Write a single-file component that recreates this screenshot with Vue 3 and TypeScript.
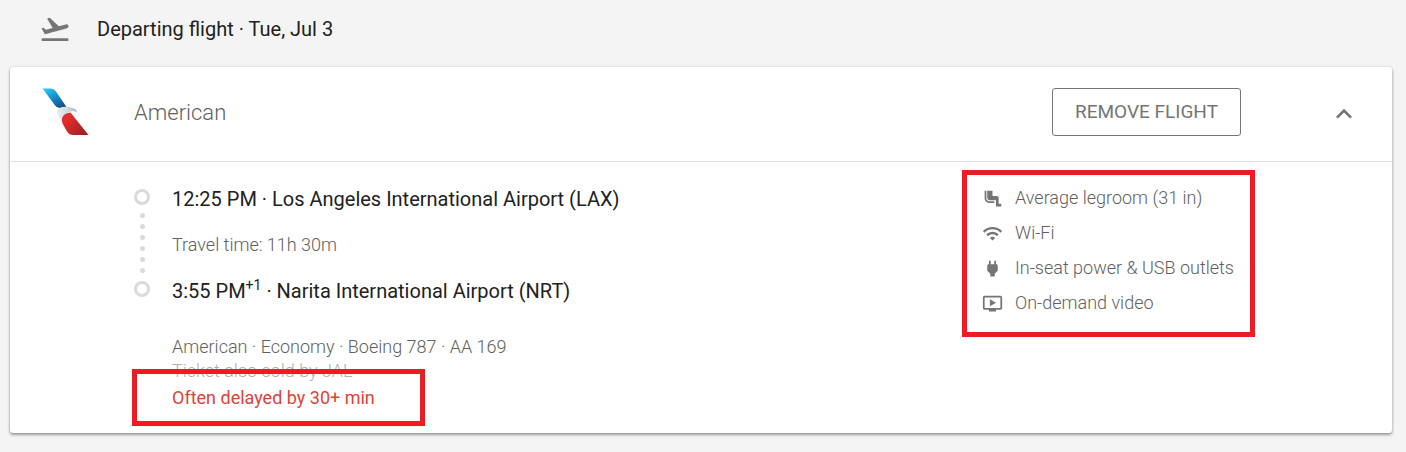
<script setup lang="ts">
import { ref } from 'vue'

interface Amenity {
  label: string
  path: string
}

const expanded = ref(true)

const amenities: Amenity[] = [
  {
    label: 'Average legroom (31 in)',
    path: 'M5 12V3H3v9c0 2.76 2.24 5 5 5h6v-2H8c-1.66 0-3-1.34-3-3zm15.5 6H19v-7c0-1.1-.9-2-2-2h-5V3H6v8c0 1.65 1.35 3 3 3h7v7h6v-3z',
  },
  {
    label: 'Wi-Fi',
    path: 'M1 9l2 2c4.97-4.97 13.03-4.97 18 0l2-2C16.93 2.93 7.08 2.93 1 9zm8 8l3 3 3-3c-1.65-1.66-4.34-1.66-6 0zm-4-4l2 2c2.76-2.76 7.24-2.76 10 0l2-2C15.14 9.14 8.87 9.14 5 13z',
  },
  {
    label: 'In-seat power & USB outlets',
    path: 'M16.01 7L16 3h-2v4h-4V3H8v4h-.01C7 6.99 6 7.99 6 8.99v5.49L9.5 18v3h5v-3l3.5-3.51v-5.5c0-1-1-2-1.99-1.99z',
  },
  {
    label: 'On-demand video',
    path: 'M21 3H3c-1.11 0-2 .89-2 2v12c0 1.1.89 2 2 2h5v2h8v-2h5c1.1 0 1.99-.9 1.99-2L23 5c0-1.1-.9-2-2-2zm0 14H3V5h18v12zm-5-6l-7 4V7z',
  },
]
</script>

<template>
  <main class="page">
    <header class="leg-title">
      <svg class="icon-large" viewBox="0 0 24 24" aria-hidden="true">
        <path d="M2 19h20v2H2zM22.07 9.64c-.21-.8-1.04-1.28-1.84-1.06L14.92 10l-6.9-6.43-1.93.51 4.14 7.17-4.97 1.33-1.97-1.54-1.45.39 1.82 3.16.77 1.33 1.6-.43 5.31-1.42 4.35-1.16L21 11.49c.81-.23 1.28-1.05 1.07-1.85z" />
      </svg>
      <h1>Departing flight · Tue, Jul 3</h1>
    </header>

    <section class="card">
      <div class="card-head">
        <svg class="logo" viewBox="0 0 48 48" role="img" aria-label="American Airlines">
          <defs>
            <linearGradient id="blue" x1="0" y1="0" x2="0.6" y2="1">
              <stop offset="0" stop-color="#2fd0f8" />
              <stop offset="0.5" stop-color="#1694cf" />
              <stop offset="1" stop-color="#17568f" />
            </linearGradient>
            <linearGradient id="red" x1="0" y1="0" x2="1" y2="0.7">
              <stop offset="0.3" stop-color="#e12d2b" />
              <stop offset="1" stop-color="#9f2026" />
            </linearGradient>
            <linearGradient id="silver" x1="0" y1="0" x2="1" y2="0">
              <stop offset="0" stop-color="#e9eef1" />
              <stop offset="0.5" stop-color="#d3dbe0" />
              <stop offset="1" stop-color="#aab7c0" />
            </linearGradient>
          </defs>
          <path fill="url(#blue)" d="M0.500 0.500h8.500q3 0 4.800 2.700L24.500 19q-4-.2-6.500.9-3.200 0-4.900-2.400z" />
          <path fill="url(#silver)" d="M15 22.500c2-3.500 9-4.500 14-3 3.500.8 5.500 2 6 4.500-2-1-4-.9-6-.4-4.500.8-7.500 3-8.500 9-3-2-6-6-5.500-10.100z" />
          <path fill="url(#red)" d="M28.500 24.500L46.500 47H31.500q-4 0-6.300-3.200L21 36.500c-3-6 0-11.500 7.500-12z" />
        </svg>
        <h2>American</h2>
        <button class="remove" type="button">REMOVE FLIGHT</button>
        <button
          class="toggle"
          type="button"
          aria-label="Toggle flight details"
          :aria-expanded="expanded"
          @click="expanded = !expanded"
        >
          <svg class="icon-large" :class="{ flipped: !expanded }" viewBox="0 0 24 24" aria-hidden="true">
            <path d="M12 8l-6 6 1.410 1.410L12 10.830l4.590 4.580L18 14z" />
          </svg>
        </button>
      </div>

      <div v-if="expanded" class="card-body">
        <div class="route" aria-hidden="true">
          <i class="stop"></i>
          <div class="dots"><i v-for="n in 6" :key="n"></i></div>
          <i class="stop"></i>
        </div>
        <div class="details">
          <p class="point">12:25 PM · Los Angeles International Airport (LAX)</p>
          <p class="travel">Travel time: 11h 30m</p>
          <p class="point">3:55 PM<sup>+1</sup> · Narita International Airport (NRT)</p>
          <p class="meta">American · Economy · Boeing 787 · AA 169</p>
          <p class="sold">Ticket also sold by JAL</p>
          <p class="delay">Often delayed by 30+ min</p>
        </div>
        <ul class="amenities">
          <li v-for="item in amenities" :key="item.label">
            <svg viewBox="0 0 24 24" aria-hidden="true"><path :d="item.path" /></svg>
            <span>{{ item.label }}</span>
          </li>
        </ul>
      </div>
    </section>
  </main>
</template>

<style>
body {
  background: #f4f4f4;
}
</style>

<style scoped>
.page {
  padding: 0 14px 19px 10px;
  font-family: Roboto, "Liberation Sans", sans-serif;
  color: #212121;
}

h1,
h2,
p,
ul {
  margin: 0;
  padding: 0;
  font-weight: 400;
}

svg {
  display: block;
  flex: none;
  fill: #757575;
}

.icon-large {
  width: 32px;
  height: 32px;
}

.flipped {
  transform: rotate(180deg);
}

.leg-title {
  display: flex;
  align-items: center;
  gap: 26px;
  height: 58px;
  padding: 0 0 9px 29px;
}

h1 {
  font-size: 20px;
  line-height: 24px;
}

.card {
  background: #fff;
  border-radius: 3px;
  box-shadow: 0 2px 3px rgba(0, 0, 0, 0.34), 0 0 3px rgba(0, 0, 0, 0.14);
}

.card-head {
  display: flex;
  align-items: center;
  height: 90px;
  padding: 0 32px 4px;
  border-bottom: 1px solid #e0e0e0;
}

.logo {
  width: 48px;
  height: 48px;
}

h2 {
  flex: 1;
  margin-left: 44px;
  padding-top: 2px;
  font-size: 22px;
  font-weight: 300;
  line-height: 28px;
  color: #616161;
}

.remove {
  height: 48px;
  padding: 0 22px;
  border: 1px solid #757575;
  border-radius: 3px;
  background: #fff;
  color: #757575;
  font: 400 19px/24px Roboto, "Liberation Sans", sans-serif;
}

.toggle {
  margin-left: 87px;
  padding: 4px 0 0;
  border: 0;
  background: none;
}

.card-body {
  display: flex;
  padding: 23px 0 23px 124px;
}

.route {
  display: flex;
  flex-direction: column;
  align-items: center;
  width: 16px;
  height: 120px;
  padding-top: 4px;
}

.stop {
  box-sizing: border-box;
  width: 16px;
  height: 16px;
  border: 3px solid #dadada;
  border-radius: 50%;
}

.dots {
  display: flex;
  flex-direction: column;
  gap: 6px;
  padding: 8px 0;
}

.dots i {
  width: 5px;
  height: 5px;
  border-radius: 50%;
  background: #dadada;
}

.details {
  flex: 1;
  margin-left: 22px;
  font-size: 18px;
  line-height: 24px;
  color: #616161;
}

.details p {
  font-weight: 300;
}

.details .point {
  font-size: 20px;
  font-weight: 400;
  line-height: 28px;
  color: #212121;
}

.point sup {
  font-size: 14px;
  line-height: 0;
  vertical-align: 8px;
}

.travel {
  margin: 20px 0;
}

.meta {
  margin-top: 30px;
}

.details .sold {
  color: #b0b0b0;
}

.details .delay {
  position: relative;
  margin-top: 3px;
  font-weight: 400;
  color: #db4437;
}

.delay::before,
.amenities::before {
  content: "";
  position: absolute;
  box-sizing: border-box;
  border: 5px solid #ed1c24;
  pointer-events: none;
}

.delay::before {
  top: -17px;
  left: -40px;
  width: 293px;
  height: 57px;
}

.amenities {
  position: relative;
  display: flex;
  flex: 0 0 410px;
  flex-direction: column;
  gap: 11px;
  align-self: flex-start;
  margin-top: 1px;
  font-size: 18px;
  font-weight: 300;
  line-height: 24px;
  color: #616161;
  list-style: none;
}

.amenities::before {
  top: -16px;
  left: -20px;
  width: 293px;
  height: 167px;
}

.amenities li {
  display: flex;
  align-items: center;
  gap: 12px;
}

.amenities svg {
  width: 21px;
  height: 21px;
}
</style>
